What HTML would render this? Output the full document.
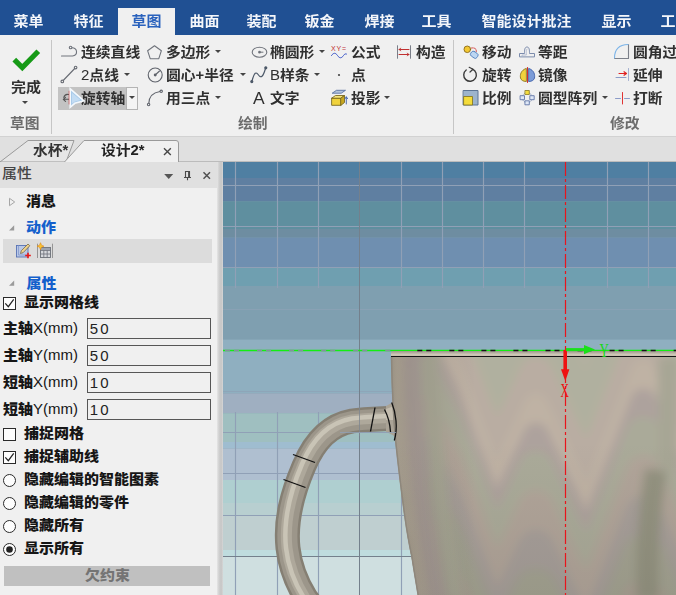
<!DOCTYPE html>
<html lang="zh-CN">
<head>
<meta charset="utf-8">
<title>草图 - 设计2</title>
<style>
*{box-sizing:border-box;margin:0;padding:0}
html,body{width:676px;height:595px;overflow:hidden;background:#f0f0f0}
body{position:relative;font-family:"Liberation Sans","Noto Sans CJK SC",sans-serif;font-size:14.5px;font-weight:700;color:#333;line-height:1}
.abs,.t,.g,.mt,.pt{position:absolute;white-space:nowrap}
.t,.g,.mt,.pt{transform:scaleY(.94);transform-origin:50% 55%}
.pt{transform:translateY(-.5px) scaleY(.94)}
/* top menu bar */
#menubar{position:absolute;left:0;top:0;width:676px;height:35.500px;background:#205093}
#acttab{position:absolute;left:118px;top:8px;width:57px;height:28px;background:#f0f0f0}
.mt{top:12.500px;margin-left:-.5px;font-size:15px;color:#f4f6fa;height:16px;line-height:16px;font-weight:700}
.mt.on{color:#2a62bd}
/* ribbon */
#ribbon{position:absolute;left:0;top:35px;width:676px;height:101px;background:#f0f0f0}
.t{height:16px;line-height:16px;font-size:14.8px;color:#303030}
.r1{top:44px}.r2{top:67px}.r3{top:90px}
.g{top:115px;height:16px;line-height:16px;font-size:14.8px;color:#6c6c6c;font-weight:700}
.dd{position:absolute;width:0;height:0;border-left:3px solid transparent;border-right:3px solid transparent;border-top:3px solid #444}
.vsep{position:absolute;width:1px;background:#c6c6c6}
/* doc tabs */
#tabstrip{position:absolute;left:0;top:136px;width:676px;height:26px;background:#e0e0e0}
/* panel */
#panel{position:absolute;left:0;top:162px;width:217px;height:433px;background:#f0f0f0}
#phead{position:absolute;left:0;top:0;width:217px;height:26px;background:#e0e0e0}
.pt{height:16px;line-height:16px;font-size:15px;color:#161616;font-weight:900}
.blue{color:#1460cc}
.l{font-weight:400;font-size:15px}
.h{font-weight:900}
.inp{position:absolute;left:86.500px;width:124.500px;height:20.500px;border:1px solid #565656;background:#f0f0f0;font-size:15px;font-weight:400;color:#222;line-height:19px;padding-left:2.300px;letter-spacing:2.200px}
.cb{position:absolute;left:3px;width:13px;height:13px;border:1px solid #2a2a2a;background:#fdfdfd}
.rb{position:absolute;left:3px;width:13px;height:13px;border:1px solid #2a2a2a;border-radius:50%;background:#fdfdfd}
/* viewport */
#view{position:absolute;left:223px;top:162px;width:453px;height:433px;overflow:hidden;background:#809fb0}
</style>
</head>
<body>

<!-- ===== top menu ===== -->
<div id="menubar"></div>
<div id="acttab"></div>
<span class="mt" style="left:14px">菜单</span>
<span class="mt" style="left:74px">特征</span>
<span class="mt on" style="left:132px">草图</span>
<span class="mt" style="left:190px">曲面</span>
<span class="mt" style="left:247px">装配</span>
<span class="mt" style="left:305px">钣金</span>
<span class="mt" style="left:365px">焊接</span>
<span class="mt" style="left:422px">工具</span>
<span class="mt" style="left:482px">智能设计批注</span>
<span class="mt" style="left:602px">显示</span>
<span class="mt" style="left:661px">工具</span>

<!-- ===== ribbon ===== -->
<div id="ribbon"></div>
<div class="vsep" style="left:51px;top:40px;height:94px"></div>
<div class="vsep" style="left:453px;top:40px;height:94px"></div>

<span class="t" style="left:11px;top:79px;font-size:15px">完成</span>
<div class="dd" style="left:22px;top:101px"></div>
<span class="g" style="left:10px">草图</span>
<span class="g" style="left:238px">绘制</span>
<span class="g" style="left:610px">修改</span>

<div class="abs" style="left:58px;top:87px;width:68px;height:22.500px;background:#c3c3c3"></div>
<div class="abs" style="left:126px;top:87px;width:11.500px;height:22.500px;background:#f4f4f4;border:1px solid #b4b4b4"></div>

<span class="t r1" style="left:81px">连续直线</span>
<span class="t r2" style="left:81px"><span class="l">2</span>点线</span><div class="dd" style="left:124px;top:73px"></div>
<span class="t r3" style="left:81px">旋转轴</span><div class="dd" style="left:129px;top:96px"></div>

<span class="t r1" style="left:166px">多边形</span><div class="dd" style="left:215px;top:50px"></div>
<span class="t r2" style="left:166px">圆心+半径</span><div class="dd" style="left:240px;top:73px"></div>
<span class="t r3" style="left:166px">用三点</span><div class="dd" style="left:215px;top:96px"></div>

<span class="t r1" style="left:270px">椭圆形</span><div class="dd" style="left:319px;top:50px"></div>
<span class="t r2" style="left:270px"><span class="l">B</span>样条</span><div class="dd" style="left:314px;top:73px"></div>
<span class="t r3" style="left:253px;font-weight:400;font-size:17.500px">A</span>
<span class="t r3" style="left:270px">文字</span>

<span class="t r1" style="left:351px">公式</span>
<span class="t r2" style="left:351px">点</span>
<span class="t r3" style="left:351px">投影</span><div class="dd" style="left:384px;top:96px"></div>

<span class="t r1" style="left:416px">构造</span>

<span class="t r1" style="left:482px">移动</span>
<span class="t r2" style="left:482px">旋转</span>
<span class="t r3" style="left:482px">比例</span>
<span class="t r1" style="left:538px">等距</span>
<span class="t r2" style="left:538px">镜像</span>
<span class="t r3" style="left:538px">圆型阵列</span><div class="dd" style="left:602px;top:96px"></div>
<span class="t r1" style="left:633px">圆角过渡</span>
<span class="t r2" style="left:633px">延伸</span>
<span class="t r3" style="left:633px">打断</span>


<!-- ===== ribbon icons ===== -->
<svg class="abs" style="left:0;top:0" width="676" height="136" viewBox="0 0 676 136" fill="none" stroke-linecap="round" stroke-linejoin="round">
  <!-- finish check -->
  <path d="M14.300,59.600 L22.300,67.600 L38.300,51.300" stroke="#169a16" stroke-width="5.200" stroke-linecap="butt" stroke-linejoin="miter"/>
  <!-- polyline -->
  <g stroke="#70747c" stroke-width="1.100">
    <path d="M61.500,56 H72.500 C78,55.500 78,48 71.800,47.800"/>
    <circle cx="70.600" cy="47.500" r="1.300" fill="#f0f0f0"/>
  </g>
  <!-- 2 point line -->
  <g stroke="#686c74" stroke-width="1.100">
    <path d="M63.200,80.500 L74.700,68.500"/>
    <circle cx="62.300" cy="81.400" r="1.300" fill="#f0f0f0"/>
    <circle cx="75.600" cy="67.600" r="1.300" fill="#f0f0f0"/>
  </g>
  <!-- rotation axis icon -->
  <g stroke="#555" stroke-width="1.100">
    <path d="M63.500,99.300 H69 M65.500,97.300 L63.300,99.300 L65.500,101.300"/>
    <path d="M63.800,97.500 C64.500,95 66.500,94 68.500,94.500"/>
    <path d="M69.300,91 V104" stroke="#c83232"/>
  </g>
  <!-- mouse cursor -->
  <path d="M70.200,88.800 L70.200,107.300 L74.800,103.300 L84,100.800 Z" fill="#a9cbea" stroke="#f4f8fc" stroke-width="1.600" stroke-linejoin="miter"/>
  <path d="M72,93 L72,103.500 L75,101.500 L80.500,100 Z" fill="#c3dcf3" stroke="none"/>
  <!-- polygon -->
  <path d="M154.500,45.700 L161.400,50.700 L158.800,58.700 L150.200,58.700 L147.600,50.700 Z" stroke="#70747c" stroke-width="1.100"/>
  <!-- circle center radius -->
  <g stroke="#60646c" stroke-width="1.100">
    <circle cx="155.200" cy="75" r="7"/>
    <path d="M155.200,75 L159.500,71"/>
    <circle cx="155.200" cy="75" r="0.900" fill="#555"/>
  </g>
  <!-- three point arc -->
  <g stroke="#60646c" stroke-width="1.100">
    <path d="M148.800,103.500 C149,96.500 153,92.500 160,91.500"/>
    <circle cx="148.600" cy="104.500" r="1.200" fill="#f0f0f0"/>
    <circle cx="161.200" cy="91.300" r="1.200" fill="#f0f0f0"/>
  </g>
  <!-- ellipse -->
  <g stroke="#70747c" stroke-width="1.100">
    <ellipse cx="259.500" cy="52.200" rx="7.300" ry="5"/>
    <path d="M259.500,52.200 H263" stroke-width="1"/>
    <circle cx="259.500" cy="52.200" r="0.800" fill="#555"/>
  </g>
  <!-- b-spline -->
  <g stroke="#4c5868" stroke-width="1.200">
    <path d="M252,81 C254.500,72 256,71.500 258.500,75 C261,78.500 263,77 265.500,68.500"/>
    <circle cx="251.800" cy="81.600" r="1" fill="#4c5868"/>
    <circle cx="265.800" cy="67.800" r="1" fill="#4c5868"/>
  </g>
  <!-- formula wave -->
  <path d="M331.500,55.500 C333.500,52.500 335.500,52.500 337.500,55.500 C339.500,58.500 341.500,58.500 343.500,55.500 C344.500,54 345.500,53.500 346.500,54" stroke="#3a55c8" stroke-width="1"/>
  <!-- point -->
  <circle cx="339" cy="75" r="1.100" fill="#444"/>
  <!-- project -->
  <g stroke-width="0.900">
    <path d="M332,98 L341,98 L341,105.300 L332,105.300 Z" fill="#f0d23c" stroke="#7a6a20"/>
    <path d="M332,98 L335.500,95.500 L344.500,95.500 L341,98 Z" fill="#f6e47a" stroke="#7a6a20"/>
    <path d="M341,98 L344.500,95.500 L344.500,102.500 L341,105.300 Z" fill="#c8a820" stroke="#7a6a20"/>
    <path d="M332.500,93 L336.500,90.300 L345.500,90.300 L341.500,93 Z" fill="#b4c4dc" stroke="#5870a0"/>
    <path d="M346.300,104 V97 M345,98.700 L346.300,96.800 L347.600,98.700" stroke="#4060a8" stroke-width="0.900"/>
  </g>
  <!-- construction -->
  <g stroke-width="1">
    <path d="M397.500,45.700 V58.300 M410.500,45.700 V58.300" stroke="#7a7e88"/>
    <path d="M399,49.500 H409 M399,54.500 H409" stroke="#c03030"/>
    <path d="M400.800,48.200 L399,49.500 L400.800,50.800 M407.200,53.200 L409,54.500 L407.200,55.800" stroke="#c03030" stroke-width="0.800"/>
  </g>
  <!-- move -->
  <g stroke-width="0.900">
    <circle cx="467.300" cy="49.300" r="3.300" fill="#f3c832" stroke="#8a6a18"/>
    <path d="M471.500,48 C475,47.500 476.500,49 476.300,51.500" stroke="#d03030" stroke-dasharray="1.500 1.200"/>
    <rect x="470.500" y="52" width="7.500" height="5.500" rx="2" transform="rotate(35 474.250 54.750)" fill="#bcd6f2" stroke="#5a86c0"/>
  </g>
  <!-- rotate -->
  <g stroke="#3c3c3c" stroke-width="1.400">
    <path d="M466.200,70 A6.300,6.300 0 1 0 472.500,69.200"/>
    <path d="M469.200,67.300 L473,69.300 L470,72" stroke-width="1.200"/>
  </g>
  <!-- scale -->
  <rect x="463.500" y="90.500" width="14.500" height="14.500" fill="#9db4cc" stroke="#5c7494" stroke-width="1"/>
  <rect x="464" y="96.500" width="8.500" height="8.500" fill="#f4dc3c" stroke="#8a7a20" stroke-width="0.900"/>
  <!-- offset -->
  <path d="M519.500,56.500 V53.500 H524.500 C524.500,50.500 524.500,47 527,47 C529.500,47 529.500,50.500 529.500,53.500 H534.500 V56.500 Z" stroke="#7c8cac" stroke-width="1"/>
  <path d="M522,56.500 V55 H526.300 C526.300,52 526,49 527,49" stroke="#a8b4cc" stroke-width="0.800"/>
  <!-- mirror -->
  <g stroke-width="0.900">
    <path d="M526,68.500 C520.500,70.500 520,75 520.500,78 C521,80 523,81.500 526,81.500 Z" fill="#f0d23c" stroke="#8a7420"/>
    <path d="M529,68.500 C534.500,70.500 535,75 534.500,78 C534,80 532,81.500 529,81.500 Z" fill="#7c9cd8" stroke="#4060a8"/>
    <path d="M527.500,67.500 V82.500" stroke="#d03030" stroke-width="1"/>
  </g>
  <!-- circular pattern -->
  <g stroke-width="0.800">
    <circle cx="527.300" cy="97.700" r="5" stroke="#8898b8" stroke-dasharray="1.200 1.200"/>
    <rect x="525.300" y="90.500" width="4" height="4" fill="#f4dc3c" stroke="#8a7a20"/>
    <rect x="520.500" y="95.700" width="4" height="4" fill="#dfe8f6" stroke="#5068a0"/>
    <rect x="530.200" y="95.700" width="4" height="4" fill="#dfe8f6" stroke="#5068a0"/>
    <rect x="525.300" y="100.800" width="4" height="4" fill="#dfe8f6" stroke="#5068a0"/>
  </g>
  <!-- fillet -->
  <path d="M628.500,44.500 V58.500 H614.500" stroke="#7c808a" stroke-width="1.100"/>
  <path d="M614.500,58 C614.500,50 619,44.700 628,44.500" stroke="#7cb4e8" stroke-width="1.100"/>
  <!-- extend -->
  <path d="M616,77.500 H626" stroke="#8c9cc8" stroke-width="1"/>
  <path d="M628.500,68.500 V80.500" stroke="#a4b0d0" stroke-width="1"/>
  <path d="M619,73.500 H626 M624,71.700 L626.500,73.500 L624,75.300" stroke="#e02020" stroke-width="1.100"/>
  <!-- break -->
  <path d="M615.500,98.500 H620.500 M624.500,98.500 H629.500" stroke="#8c9cc8" stroke-width="1"/>
  <path d="M622.500,92.500 V104" stroke="#e03434" stroke-width="1"/>
</svg>
<span class="abs" style="left:331px;top:45px;font-size:7px;line-height:7px;color:#c03030;font-weight:400;letter-spacing:.8px">XY=</span>

<!-- ===== document tabs ===== -->
<div id="tabstrip"></div>
<div class="abs" style="left:0;top:136px;width:676px;height:1px;background:#d2d2d2"></div>
<div class="abs" style="left:178px;top:161px;width:498px;height:1px;background:#bcbcbc"></div>
<svg class="abs" style="left:0;top:136px" width="240" height="26" viewBox="0 0 240 26">
  <path d="M0,26 L28,4.5 L74,4.5 L66,26 Z" fill="#e6e6e6" stroke="#9a9a9a" stroke-width="1"/>
  <path d="M64,26.5 L84,4.5 L176,4.5 Q178.5,4.5 178.5,7 L178.5,26.5 Z" fill="#f0f0f0" stroke="#9a9a9a" stroke-width="1"/>
  <path d="M164,12.200 l6.800,6.800 m0,-6.800 l-6.800,6.800" stroke="#484848" stroke-width="1.400" fill="none"/>
</svg>
<span class="t" style="left:33px;top:142px;color:#333">水杯*</span>
<span class="t" style="left:101px;top:142px;color:#222">设计<span style="font-weight:700;font-family:'Liberation Sans',sans-serif">2*</span></span>

<!-- ===== property panel ===== -->
<div id="panel">
  <div id="phead"></div>
</div>
<div class="abs" style="left:217px;top:162px;width:6px;height:433px;background:linear-gradient(90deg,#e6e6e6 0,#cfcfcf 35%,#c6c6c6 70%,#d6d6d6 100%)"></div>
<span class="pt" style="left:2px;top:166px;color:#444;font-weight:500">属性</span>

<span class="pt" style="left:26px;top:194px">消息</span>
<span class="pt blue" style="left:26px;top:220px">动作</span>
<div class="abs" style="left:3px;top:239px;width:209px;height:24px;background:#dcdcdc"></div>
<span class="pt blue" style="left:26.500px;top:276px">属性</span>

<div class="cb" style="top:297px"></div>
<span class="pt" style="left:24px;top:295px">显示网格线</span>

<span class="pt" style="left:3px;top:321px">主轴<span class="l">X(mm)</span></span><div class="inp" style="top:318.400px">50</div>
<span class="pt" style="left:3px;top:348px">主轴<span class="l">Y(mm)</span></span><div class="inp" style="top:345.400px">50</div>
<span class="pt" style="left:3px;top:375px">短轴<span class="l">X(mm)</span></span><div class="inp" style="top:372.400px">10</div>
<span class="pt" style="left:3px;top:402px">短轴<span class="l">Y(mm)</span></span><div class="inp" style="top:399.400px">10</div>

<div class="cb" style="top:428px"></div>
<span class="pt" style="left:24px;top:426px">捕捉网格</span>
<div class="cb" style="top:451px"></div>
<span class="pt" style="left:24px;top:449px">捕捉辅助线</span>
<div class="rb" style="top:474px"></div>
<span class="pt" style="left:24px;top:472px">隐藏编辑的智能图素</span>
<div class="rb" style="top:497px"></div>
<span class="pt" style="left:24px;top:495px">隐藏编辑的零件</span>
<div class="rb" style="top:520px"></div>
<span class="pt" style="left:24px;top:518px">隐藏所有</span>
<div class="rb" style="top:543px"></div>
<span class="pt" style="left:24px;top:541px">显示所有</span>

<div class="abs" style="left:4px;top:565.500px;width:206px;height:20px;background:#c0c0c0"></div>
<span class="pt" style="left:85px;top:568px;color:#747474;font-weight:900">欠约束</span>


<svg class="abs" style="left:0;top:162px" width="223" height="433" viewBox="0 162 223 433" fill="none">
  <!-- header glyphs -->
  <path d="M164.200,174 H173.200 L168.700,179 Z" fill="#565656"/>
  <g stroke="#4a4a4a" stroke-width="1.100">
    <path d="M185.500,177.300 V171.500 H189.500 V177.300 M184,177.500 H191 M187.500,177.500 V180.300"/>
    <path d="M188.900,171.500 V177.300" stroke-width="1.600"/>
  </g>
  <path d="M203.500,172.200 L210,178.700 M210,172.200 L203.500,178.700" stroke="#505050" stroke-width="1.500"/>
  <!-- tree markers -->
  <path d="M9.500,198.300 L14.700,202 L9.500,205.700 Z" stroke="#a6a6a6" stroke-width="1"/>
  <path d="M14.200,225.200 V230.400 H9 Z" fill="#9a9a9a"/>
  <path d="M14.200,280.600 V285.800 H9 Z" fill="#9a9a9a"/>
  <!-- action icons -->
  <g stroke-width="0.900">
    <rect x="16.500" y="245.500" width="11.500" height="11.500" fill="#b9c8e6" stroke="#5872b4"/>
    <path d="M18.500,245.500 V255 H28" stroke="#8498cc" stroke-width="0.800"/>
    <path d="M20.500,253.500 L21.300,250.700 L28,244 L29.800,245.800 L23.200,252.600 Z" fill="#eed28a" stroke="#6a5a3a" stroke-width="0.700"/>
    <path d="M25.200,255.500 H30.800 M28,252.700 V258.300" stroke="#e81818" stroke-width="1.600"/>
  </g>
  <g stroke-width="0.900">
    <path d="M37.500,243.700 V258 M52.500,243.700 V258" stroke="#8c8c8c"/>
    <rect x="40.500" y="247.500" width="10" height="10" fill="#d6d8dc" stroke="#6c7078"/>
    <path d="M40.500,250.500 H50.500 M40.500,254 H50.500 M43.800,250.500 V257.500 M47.200,250.500 V257.500" stroke="#6c7078" stroke-width="0.800"/>
    <rect x="41" y="248" width="9" height="2" fill="#9ea4b0" stroke="none"/>
    <path d="M40.500,242.700 L41.500,245.200 L44,246.200 L41.500,247.200 L40.500,249.700 L39.500,247.200 L37,246.200 L39.500,245.200 Z" fill="#f8c430" stroke="#e08a18" stroke-width="0.600"/>
  </g>
  <!-- check marks -->
  <path d="M5.300,303.300 L8.300,306.700 L13.700,299.300" stroke="#222" stroke-width="1.200"/>
  <path d="M5.300,457.300 L8.300,460.700 L13.700,453.300" stroke="#222" stroke-width="1.200"/>
  <!-- radio dot -->
  <circle cx="9.500" cy="549.500" r="3.300" fill="#222"/>
</svg>

<!-- ===== 3D viewport ===== -->
<div id="view">
<svg id="scene" width="453" height="433" viewBox="223 162 453 433" style="position:absolute;left:0;top:0">
  <!-- banded background -->
  <rect x="223" y="162" width="453" height="16" fill="#4f7fa2"/>
  <rect x="223" y="178" width="453" height="23.300" fill="#5f7fa1"/>
  <rect x="223" y="201.300" width="453" height="27.700" fill="#5f8f9f"/>
  <rect x="223" y="229" width="453" height="8.600" fill="#6e8da1"/>
  <rect x="223" y="237.600" width="453" height="30.400" fill="#6f8fb0"/>
  <rect x="223" y="268" width="453" height="18" fill="#6f9fb0"/>
  <rect x="223" y="286" width="453" height="53.600" fill="#7f9fb0"/>
  <rect x="223" y="339.600" width="453" height="53.800" fill="#8fafc0"/>
  <rect x="223" y="393.400" width="453" height="19.800" fill="#9fafc1"/>
  <rect x="223" y="413.200" width="453" height="29" fill="#9fbfc0"/>
  <rect x="223" y="442" width="453" height="6.500" fill="#9fbdd0"/>
  <rect x="223" y="448.500" width="453" height="31.500" fill="#afbfd0"/>
  <rect x="223" y="480" width="453" height="23" fill="#afcfd0"/>
  <rect x="223" y="503" width="453" height="13" fill="#b8cfd0"/>
  <rect x="223" y="516" width="453" height="34" fill="#bfcfd0"/>
  <rect x="223" y="550" width="453" height="6.500" fill="#bfdcde"/>
  <rect x="223" y="556.500" width="453" height="39" fill="#cfdfe0"/>

  <defs>
    <linearGradient id="cupg" gradientUnits="userSpaceOnUse" x1="390" y1="0" x2="676" y2="0">
      <stop offset="0" stop-color="#9c9488"/>
      <stop offset="0.03" stop-color="#b4aca0"/>
      <stop offset="0.10" stop-color="#ada39c"/>
      <stop offset="0.20" stop-color="#a9a698"/>
      <stop offset="0.30" stop-color="#b8ab9e"/>
      <stop offset="0.40" stop-color="#aaa898"/>
      <stop offset="0.52" stop-color="#b9ac9f"/>
      <stop offset="0.62" stop-color="#a7a595"/>
      <stop offset="0.74" stop-color="#b7aa9f"/>
      <stop offset="0.86" stop-color="#a9a396"/>
      <stop offset="1" stop-color="#b0a39c"/>
    </linearGradient>
    <linearGradient id="rimg" x1="0" y1="0" x2="0" y2="1">
      <stop offset="0" stop-color="#9c968a"/>
      <stop offset="0.6" stop-color="#cfc8b8"/>
      <stop offset="1" stop-color="#bdb5a6"/>
    </linearGradient>
    <clipPath id="cupclip"><path d="M391,357 C391.8,395 393.2,422 395.6,445 C397.5,463 400.5,488 404.2,515.5 C406.5,532 409.5,548 411.3,556 C413.5,570 416,585 418,597 L676,596 L676,357 Z"/></clipPath>
    <clipPath id="cupclip2"><rect x="400" y="340" width="280" height="20"/></clipPath>
    <filter id="b4" x="-20%" y="-20%" width="140%" height="140%"><feGaussianBlur stdDeviation="5"/></filter>
    <linearGradient id="shadeL" x1="0" y1="0" x2="1" y2="0"><stop offset="0" stop-color="#40382c" stop-opacity="0.16"/><stop offset="1" stop-color="#40382c" stop-opacity="0"/></linearGradient>
    <linearGradient id="shade" x1="0" y1="0" x2="0" y2="1"><stop offset="0" stop-color="#3a3428" stop-opacity="0"/><stop offset="0.35" stop-color="#3a3428" stop-opacity="0"/><stop offset="1" stop-color="#34342c" stop-opacity="0.09"/></linearGradient>
    <filter id="b1" x="-20%" y="-20%" width="140%" height="140%"><feGaussianBlur stdDeviation="0.7"/></filter>
  </defs>
  <!-- grid -->
  <g stroke="#90a0b6" stroke-width="1.150">
    <path d="M235.5,162V288 M277.5,162V288 M318.5,162V288 M401.5,162V288 M442.5,162V288 M483.5,162V288 M524.5,162V288 M607.5,162V288 M648.5,162V288"/>
    <path d="M235.5,412V595 M277.5,412V595 M318.5,412V595 M401.5,412V595"/>
    <path d="M223,185.5H676 M223,226.5H676 M223,267.5H676 M223,432.5H676 M223,473.5H676 M223,515.5H676"/>
  </g>
  <g stroke="#8ea2b6" stroke-width="1" shape-rendering="crispEdges" opacity=".7">
    <path d="M223,309.5H676 M223,391.5H400"/>
  </g>
  <g stroke="#74808c" stroke-width="1" shape-rendering="crispEdges">
    <path d="M359.5,162V595 M223,556.5H676"/>
  </g>
  <!-- green horizontal axis -->
  <path d="M223,350.5H676" stroke="#12ee12" stroke-width="1.600"/>
  <path d="M225,350.5H391" stroke="#85909c" stroke-width="1.6" stroke-dasharray="5 4 5 18.050"/>

  <!-- cup handle -->
  <g fill="none" stroke-linecap="butt">
    <path id="hpath" d="M398,418 C380,419 366,419 352,421 C330,425 315,440 304,466 C292,494 285,520 288,548 C290,566 296,582 306,598 L312,606" stroke="#857f73" stroke-width="25"/>
    <path d="M398,418 C380,419 366,419 352,421 C330,425 315,440 304,466 C292,494 285,520 288,548 C290,566 296,582 306,598 L312,606" stroke="#9c968a" stroke-width="20" filter="url(#b1)"/>
    <path d="M398,417 C380,418 366,418 352,420 C330,424 314,439 303,465 C291,493 284,520 287,548 C289,566 295,582 305,598 L311,606" stroke="#aea89b" stroke-width="11" filter="url(#b1)"/>
    <path d="M398,415.5 C380,416.5 366,416.5 352,418.5 C329,422.5 313,438 302,464 C290,492 283,520 286,548 C288,566 294,582 304,598 L310,606" stroke="#c9c4b6" stroke-width="4.500" filter="url(#b1)"/>
  </g>
  <!-- handle flare at cup -->
  <path d="M386,406 C390,404 393,402 396,399 L399,441 C396,437 392,434 386,432 Z" fill="#aaa396"/>
  <path d="M386,409 C390,408 393,406 396,404 L397,420 L386,420 Z" fill="#c4bdaf"/>
  <!-- cup body -->
  <path d="M391,353 Q391,351 393,351 L676,351 L676,357 L391,357 Z" fill="url(#rimg)"/>
  <path d="M391,357 C391.8,395 393.2,422 395.6,445 C397.5,463 400.5,488 404.2,515.5 C406.5,532 409.5,548 411.3,556 C413.5,570 416,585 418,597 L676,596 L676,357 Z" fill="url(#cupg)"/>
  <g clip-path="url(#cupclip)">
   <g filter="url(#b4)" fill="none" stroke-linejoin="round">
    <path d="M415.0,130.0 L446.0,193.0 L495.4,321.6 L536.0,235.8 L587.6,343.0 L643.4,201.5 L700.0,330.0" stroke="#b6aea4" stroke-width="40"/>
    <path d="M415.0,175.0 L446.0,238.0 L495.4,366.6 L536.0,280.8 L587.6,388.0 L643.4,246.5 L700.0,375.0" stroke="#b2b0a1" stroke-width="46"/>
    <path d="M415.0,222.0 L446.0,285.0 L495.4,413.6 L536.0,327.8 L587.6,435.0 L643.4,293.5 L700.0,422.0" stroke="#b0b09f" stroke-width="50"/>
    <path d="M415.0,268.0 L446.0,331.0 L495.4,459.6 L536.0,373.8 L587.6,481.0 L643.4,339.5 L700.0,468.0" stroke="#b9ada2" stroke-width="34"/>
    <path d="M415.0,300.0 L446.0,363.0 L495.4,491.6 L536.0,405.8 L587.6,513.0 L643.4,371.5 L700.0,500.0" stroke="#bfb2a4" stroke-width="22"/>
    <path d="M415.0,330.0 L446.0,393.0 L495.4,521.6 L536.0,435.8 L587.6,543.0 L643.4,401.5 L700.0,530.0" stroke="#ada29d" stroke-width="26"/>
    <path d="M415.0,362.0 L446.0,425.0 L495.4,553.6 L536.0,467.8 L587.6,575.0 L643.4,433.5 L700.0,562.0" stroke="#aaaa99" stroke-width="34"/>
    <path d="M415.0,402.0 L446.0,465.0 L495.4,593.6 L536.0,507.8 L587.6,615.0 L643.4,473.5 L700.0,602.0" stroke="#b0a499" stroke-width="36"/>
    <path d="M415.0,442.0 L446.0,505.0 L495.4,633.6 L536.0,547.8 L587.6,655.0 L643.4,513.5 L700.0,642.0" stroke="#a69e99" stroke-width="36"/>
    <path d="M415.0,485.0 L446.0,548.0 L495.4,676.6 L536.0,590.8 L587.6,698.0 L643.4,556.5 L700.0,685.0" stroke="#a3a291" stroke-width="44"/>
    <path d="M415.0,530.0 L446.0,593.0 L495.4,721.6 L536.0,635.8 L587.6,743.0 L643.4,601.5 L700.0,730.0" stroke="#a99e92" stroke-width="44"/>
    <path d="M411,350 C412,420 418,500 438,600" stroke="#a99e99" stroke-width="18"/>
    <path d="M431,350 C432,420 438,500 456,600" stroke="#a8a796" stroke-width="16"/>
    <path d="M397,350 C398,420 404,500 424,600" stroke="#b3aa9a" stroke-width="10"/>
    <path d="M648,600 C646,560 648,520 656,470" stroke="#939280" stroke-width="22"/>
    <path d="M668,357 V470" stroke="#a7a695" stroke-width="20"/>
   </g>
   <rect x="386" y="357" width="290" height="240" fill="url(#shade)"/>
   <rect x="386" y="357" width="90" height="240" fill="url(#shadeL)"/>
  </g>
  <path d="M391,356.5 H676" stroke="#161616" stroke-width="1.2"/>
  <!-- dashed hidden edge over the green axis -->
  <path d="M385.250,350.5H676" stroke="#151515" stroke-width="1.5" stroke-dasharray="5 4 5 18.050" clip-path="url(#cupclip2)"/>
  <path d="M391.5,357 C392.3,395 393.7,422 396.1,445 C398,463 401,488 404.7,515.5 C407,532 410,548 411.8,556 C414,570 416.5,585 418.5,597" fill="none" stroke="#8e877c" stroke-width="1.5"/>

  <!-- section lines on handle -->
  <g stroke="#111" stroke-width="1.3" fill="none">
    <path d="M375,407.5 L370.5,431.5"/>
    <path d="M384.5,409.5 C388,416 390,424 390.5,432"/>
    <path d="M391.700,402.600 C396,413 398,428 394.300,440.500"/>
    <path d="M293,454.5 L315,462.5"/>
    <path d="M283.5,479.5 L305.5,487.5"/>
  </g>

  <!-- major grid line drawn through handle -->
  <path d="M359.5,405V436" stroke="#7f8790" stroke-width="1" opacity=".8"/>
  <path d="M340,432.500H396" stroke="#90a0b6" stroke-width="1" opacity=".8"/>

  <!-- red vertical axis -->
  <path d="M565.5,162V595" stroke="#e8141c" stroke-width="1.2" stroke-dasharray="14 3 3 3"/>
  <path d="M565.2,350V371" stroke="#ee1111" stroke-width="3.600"/>
  <path d="M561,369.300 L569.400,369.300 L565.300,381 Z" fill="#ee1111"/>
  <path d="M566,349.600H588" stroke="#19e019" stroke-width="3"/>
  <path d="M584,345 L595,349.600 L584,354.200 Z" fill="#19e019"/>
  <text transform="translate(599.6,356.8) scale(0.66,1)" font-family="Liberation Serif, serif" font-size="19.500" fill="#19d819" font-weight="400">Y</text>
  <text transform="translate(560.6,396.8) scale(0.6,1)" font-family="Liberation Serif, serif" font-size="19.500" fill="#ee1111" font-weight="400">X</text>
</svg>
</div>

</body>
</html>
